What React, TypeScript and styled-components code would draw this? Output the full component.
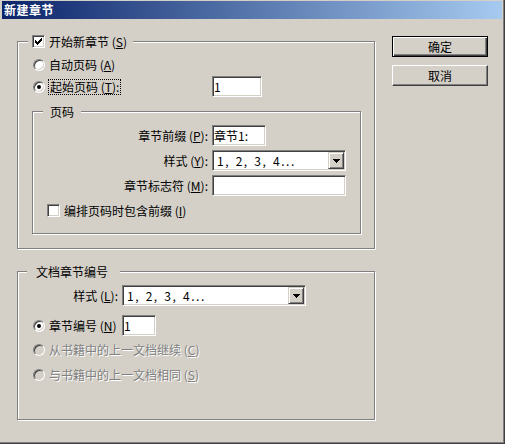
import React from "react";
import styled, { createGlobalStyle, css } from "styled-components";

const FACE = "#d4d0c8";

const GlobalStyle = createGlobalStyle`
  html, body { margin: 0; padding: 0; background: ${FACE}; }
  body {
    font-family: "Noto Sans CJK SC", "Noto Sans", sans-serif;
    font-size: 12px;
    color: #000;
  }
  * { box-sizing: border-box; }
`;

const Window = styled.div`
  width: 505px;
  height: 444px;
  background: ${FACE};
  padding: 1px 3px 0 2px;
  box-shadow: inset -1px -1px #404040, inset -2px -2px #808080;
  display: flex;
  flex-direction: column;
  overflow: hidden;
`;

const TitleBar = styled.div`
  height: 18px;
  flex: none;
  background: linear-gradient(to right, #0a246a, #a6caf0);
  color: #fff;
  font-weight: bold;
  font-size: 12px;
  line-height: 18px;
  letter-spacing: 0.5px;
  padding-left: 2px;
  display: flex;
  align-items: center;
`;

const Body = styled.div`
  display: flex;
  padding-left: 15px;
`;

const Main = styled.div`
  display: flex;
  flex-direction: column;
  padding-top: 15px;
  width: 359px;
`;

const Group = styled.fieldset<{ $w: number; $h: number; $mt?: number; $ml?: number }>`
  margin: ${(p) => p.$mt ?? 0}px 0 0 ${(p) => p.$ml ?? 0}px;
  padding: 0;
  min-inline-size: 0;
  width: ${(p) => p.$w}px;
  height: ${(p) => p.$h}px;
  border: 1px solid #808080;
  box-shadow: inset 1px 1px #fff, 1px 1px #fff;
  display: flex;
  flex-direction: column;
  flex: none;
`;

const Legend = styled.legend<{ $ml: number; $pl: number; $pr: number }>`
  margin-left: ${(p) => p.$ml}px;
  padding: 0 ${(p) => p.$pr}px 0 ${(p) => p.$pl}px;
  height: 15px;
  line-height: 15px;
  background: ${FACE};
  display: flex;
  align-items: center;
  gap: 4px;
  white-space: nowrap;
`;

const Row = styled.div<{ $mt: number; $h: number; $pl?: number }>`
  display: flex;
  align-items: center;
  margin-top: ${(p) => p.$mt}px;
  height: ${(p) => p.$h}px;
  padding-left: ${(p) => p.$pl ?? 0}px;
  flex: none;
  white-space: nowrap;
`;

const Lead = styled.div<{ $w: number; $pl?: number }>`
  width: ${(p) => p.$w}px;
  padding-left: ${(p) => p.$pl ?? 0}px;
  display: flex;
  align-items: center;
  gap: 4px;
  flex: none;
`;

const FieldLabel = styled.span<{ $w: number }>`
  width: ${(p) => p.$w}px;
  text-align: right;
  margin-right: 4px;
  flex: none;
`;

const Text = styled.span<{ $disabled?: boolean; $focus?: boolean }>`
  line-height: 14px;
  ${(p) =>
    p.$disabled &&
    css`
      color: #808080;
      text-shadow: 1px 1px #fff;
    `}
  ${(p) =>
    p.$focus &&
    css`
      outline: 1px dotted #000;
      outline-offset: 0px;
      padding: 0 1px;
    `}
`;

const RadioCircle = styled.span<{ $checked?: boolean; $disabled?: boolean }>`
  width: 12px;
  height: 12px;
  flex: none;
  border-radius: 50%;
  border: 1px solid;
  border-color: #808080 #fff #fff #808080;
  box-shadow: inset 1px 1px #404040, inset -1px -1px ${FACE};
  background: ${(p) => (p.$disabled ? FACE : "#fff")};
  display: flex;
  align-items: center;
  justify-content: center;
  &::after {
    content: "";
    width: 4px;
    height: 4px;
    border-radius: 50%;
    background: #000;
    display: ${(p) => (p.$checked ? "block" : "none")};
  }
`;

const CheckBox = styled.span`
  width: 13px;
  height: 13px;
  flex: none;
  border: 1px solid;
  border-color: #808080 #fff #fff #808080;
  box-shadow: inset 1px 1px #404040, inset -1px -1px ${FACE};
  background: #fff;
  display: flex;
  align-items: center;
  justify-content: center;
`;

const TextBox = styled.div<{ $w: number }>`
  width: ${(p) => p.$w}px;
  height: 21px;
  flex: none;
  background: #fff;
  border: 1px solid;
  border-color: #808080 #fff #fff #808080;
  box-shadow: inset 1px 1px #404040, inset -1px -1px ${FACE};
  padding: 0 2px 0 1px;
  display: flex;
  align-items: center;
  line-height: 14px;
`;

const Select = styled.div<{ $w: number }>`
  width: ${(p) => p.$w}px;
  height: 21px;
  flex: none;
  background: #fff;
  border: 1px solid;
  border-color: #808080 #fff #fff #808080;
  box-shadow: inset 1px 1px #404040, inset -1px -1px ${FACE};
  padding: 1px;
  display: flex;
  align-items: center;
`;

const SelectText = styled.span`
  flex: 1;
  padding-left: 3px;
  letter-spacing: 1.5px;
  word-spacing: 1.5px;
  line-height: 14px;
`;

const DropButton = styled.span`
  width: 16px;
  height: 17px;
  flex: none;
  background: ${FACE};
  border: 1px solid;
  border-color: ${FACE} #404040 #404040 ${FACE};
  box-shadow: inset 1px 1px #fff, inset -1px -1px #808080;
  display: flex;
  align-items: center;
  justify-content: center;
`;

const Buttons = styled.div`
  display: flex;
  flex-direction: column;
  gap: 8px;
  padding-top: 17px;
  margin-left: 16px;
`;

const Button = styled.button<{ $default?: boolean }>`
  width: 96px;
  height: 21px;
  margin: 0;
  padding: 0;
  font: inherit;
  font-size: 12px;
  color: #000;
  background: ${FACE};
  display: flex;
  align-items: center;
  justify-content: center;
  ${(p) =>
    p.$default
      ? css`
          border: 1px solid #000;
          box-shadow: inset 1px 1px #fff, inset -1px -1px #404040, inset -2px -2px #808080;
        `
      : css`
          border: 1px solid;
          border-color: #fff #404040 #404040 #fff;
          box-shadow: inset -1px -1px #808080;
        `}
`;

const CheckMark = () => (
  <svg width="7" height="7" viewBox="0 0 7 7" shapeRendering="crispEdges">
    <rect x="6" y="0" width="1" height="1" />
    <rect x="5" y="1" width="2" height="1" />
    <rect x="0" y="2" width="1" height="1" />
    <rect x="4" y="2" width="3" height="1" />
    <rect x="0" y="3" width="2" height="1" />
    <rect x="3" y="3" width="3" height="1" />
    <rect x="0" y="4" width="5" height="1" />
    <rect x="1" y="5" width="3" height="1" />
    <rect x="2" y="6" width="1" height="1" />
  </svg>
);

const DownArrow = () => (
  <svg width="7" height="4" viewBox="0 0 7 4" shapeRendering="crispEdges">
    <rect x="0" y="0" width="7" height="1" />
    <rect x="1" y="1" width="5" height="1" />
    <rect x="2" y="2" width="3" height="1" />
    <rect x="3" y="3" width="1" height="1" />
  </svg>
);

const Dropdown = ({ w, value }: { w: number; value: string }) => (
  <Select $w={w}>
    <SelectText>{value}</SelectText>
    <DropButton>
      <DownArrow />
    </DropButton>
  </Select>
);

export default function App() {
  return (
    <>
      <GlobalStyle />
      <Window>
        <TitleBar>新建章节</TitleBar>
        <Body>
          <Main>
            <Group $w={358} $h={215}>
              <Legend $ml={10} $pl={4} $pr={6}>
                <CheckBox>
                  <CheckMark />
                </CheckBox>
                <Text>
                  开始新章节 (<u>S</u>)
                </Text>
              </Legend>
              <Row $mt={8} $h={16} $pl={15}>
                <Lead $w={179}>
                  <RadioCircle />
                  <Text>
                    自动页码 (<u>A</u>)
                  </Text>
                </Lead>
              </Row>
              <Row $mt={3} $h={21} $pl={15}>
                <Lead $w={179}>
                  <RadioCircle $checked />
                  <Text $focus>
                    起始页码 (<u>T</u>):
                  </Text>
                </Lead>
                <TextBox $w={50}>1</TextBox>
              </Row>
              <Group $w={329} $h={130} $mt={7} $ml={14}>
                <Legend $ml={10} $pl={7} $pr={7}>
                  <Text>页码</Text>
                </Legend>
                <Row $mt={6} $h={21}>
                  <FieldLabel $w={175}>
                    章节前缀 (<u>P</u>):
                  </FieldLabel>
                  <TextBox $w={54}>章节1:</TextBox>
                </Row>
                <Row $mt={4} $h={21}>
                  <FieldLabel $w={175}>
                    样式 (<u>Y</u>):
                  </FieldLabel>
                  <Dropdown w={134} value="1, 2, 3, 4..." />
                </Row>
                <Row $mt={4} $h={21}>
                  <FieldLabel $w={175}>
                    章节标志符 (<u>M</u>):
                  </FieldLabel>
                  <TextBox $w={134} />
                </Row>
                <Row $mt={8} $h={13} $pl={14}>
                  <Lead $w={300}>
                    <CheckBox />
                    <Text>
                      编排页码时包含前缀 (<u>I</u>)
                    </Text>
                  </Lead>
                </Row>
              </Group>
            </Group>

            <Group $w={358} $h={156} $mt={15}>
              <Legend $ml={9} $pl={9} $pr={12}>
                <Text>文档章节编号</Text>
              </Legend>
              <Row $mt={6} $h={21}>
                <FieldLabel $w={100}>
                  样式 (<u>L</u>):
                </FieldLabel>
                <Dropdown w={184} value="1, 2, 3, 4..." />
              </Row>
              <Row $mt={9} $h={21} $pl={15}>
                <Lead $w={89}>
                  <RadioCircle $checked />
                  <Text>
                    章节编号 (<u>N</u>)
                  </Text>
                </Lead>
                <TextBox $w={34}>1</TextBox>
              </Row>
              <Row $mt={6} $h={16} $pl={15}>
                <Lead $w={300}>
                  <RadioCircle $disabled />
                  <Text $disabled>
                    从书籍中的上一文档继续 (<u>C</u>)
                  </Text>
                </Lead>
              </Row>
              <Row $mt={9} $h={16} $pl={15}>
                <Lead $w={300}>
                  <RadioCircle $disabled />
                  <Text $disabled>
                    与书籍中的上一文档相同 (<u>S</u>)
                  </Text>
                </Lead>
              </Row>
            </Group>
          </Main>
          <Buttons>
            <Button $default>确定</Button>
            <Button>取消</Button>
          </Buttons>
        </Body>
      </Window>
    </>
  );
}
